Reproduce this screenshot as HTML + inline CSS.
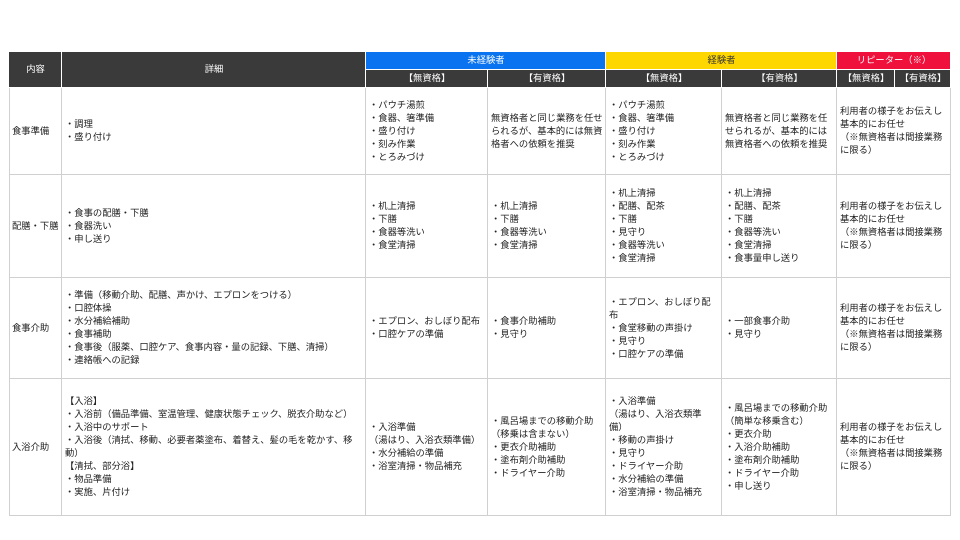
<!DOCTYPE html>
<html><head><meta charset="utf-8"><style>
body{margin:0;background:#fff;width:960px;height:540px;position:relative;overflow:hidden;font-family:"Liberation Sans","Noto Sans CJK JP",sans-serif;font-size:9.3px;color:#222}
.c{position:absolute;box-sizing:border-box;display:flex;align-items:center;padding:0 2px 0 3px;line-height:13px;border-right:1px solid #d0d0d0;border-bottom:1px solid #d0d0d0;white-space:pre-line}
.h{color:#fff;justify-content:center;border-color:#fff;font-size:9.3px}
.d{background:#3a3a3a}
</style></head><body>
<div style="position:absolute;left:9px;top:52px;width:942px;height:464px;border-left:1px solid #d0d0d0;border-top:1px solid #d0d0d0;box-sizing:border-box"></div>
<div class="c h d" style="left:9px;top:52px;width:53px;height:36px">内容</div>
<div class="c h d" style="left:62px;top:52px;width:304px;height:36px">詳細</div>
<div class="c h" style="left:366px;top:52px;width:240px;height:18px;background:#0a74f0">未経験者</div>
<div class="c h" style="left:606px;top:52px;width:231px;height:18px;background:#ffd700;color:#333">経験者</div>
<div class="c h" style="left:837px;top:52px;width:114px;height:18px;background:#f0103c">リピーター（※）</div>
<div class="c h d" style="left:366px;top:70px;width:122px;height:18px">【無資格】</div>
<div class="c h d" style="left:488px;top:70px;width:118px;height:18px">【有資格】</div>
<div class="c h d" style="left:606px;top:70px;width:116px;height:18px">【無資格】</div>
<div class="c h d" style="left:722px;top:70px;width:115px;height:18px">【有資格】</div>
<div class="c h d" style="left:837px;top:70px;width:58px;height:18px">【無資格】</div>
<div class="c h d" style="left:895px;top:70px;width:56px;height:18px">【有資格】</div>

<!-- row1 -->
<div class="c" style="left:9px;top:88px;width:53px;height:87px">食事準備</div>
<div class="c" style="left:62px;top:88px;width:304px;height:87px">・調理
・盛り付け</div>
<div class="c" style="left:366px;top:88px;width:122px;height:87px">・パウチ湯煎
・食器、箸準備
・盛り付け
・刻み作業
・とろみづけ</div>
<div class="c" style="left:488px;top:88px;width:118px;height:87px">無資格者と同じ業務を任せ
られるが、基本的には無資
格者への依頼を推奨</div>
<div class="c" style="left:606px;top:88px;width:116px;height:87px">・パウチ湯煎
・食器、箸準備
・盛り付け
・刻み作業
・とろみづけ</div>
<div class="c" style="left:722px;top:88px;width:115px;height:87px">無資格者と同じ業務を任
せられるが、基本的には
無資格者への依頼を推奨</div>
<div class="c" style="left:837px;top:88px;width:114px;height:87px">利用者の様子をお伝えし
基本的にお任せ
（※無資格者は間接業務
に限る）</div>

<!-- row2 -->
<div class="c" style="left:9px;top:175px;width:53px;height:103px;white-space:nowrap">配膳・下膳</div>
<div class="c" style="left:62px;top:175px;width:304px;height:103px">・食事の配膳・下膳
・食器洗い
・申し送り</div>
<div class="c" style="left:366px;top:175px;width:122px;height:103px">・机上清掃
・下膳
・食器等洗い
・食堂清掃</div>
<div class="c" style="left:488px;top:175px;width:118px;height:103px">・机上清掃
・下膳
・食器等洗い
・食堂清掃</div>
<div class="c" style="left:606px;top:175px;width:116px;height:103px">・机上清掃
・配膳、配茶
・下膳
・見守り
・食器等洗い
・食堂清掃</div>
<div class="c" style="left:722px;top:175px;width:115px;height:103px">・机上清掃
・配膳、配茶
・下膳
・食器等洗い
・食堂清掃
・食事量申し送り</div>
<div class="c" style="left:837px;top:175px;width:114px;height:103px">利用者の様子をお伝えし
基本的にお任せ
（※無資格者は間接業務
に限る）</div>

<!-- row3 -->
<div class="c" style="left:9px;top:278px;width:53px;height:101px">食事介助</div>
<div class="c" style="left:62px;top:278px;width:304px;height:101px">・準備（移動介助、配膳、声かけ、エプロンをつける）
・口腔体操
・水分補給補助
・食事補助
・食事後（服薬、口腔ケア、食事内容・量の記録、下膳、清掃）
・連絡帳への記録</div>
<div class="c" style="left:366px;top:278px;width:122px;height:101px;white-space:pre">・エプロン、おしぼり配布
・口腔ケアの準備</div>
<div class="c" style="left:488px;top:278px;width:118px;height:101px">・食事介助補助
・見守り</div>
<div class="c" style="left:606px;top:278px;width:116px;height:101px">・エプロン、おしぼり配
布
・食堂移動の声掛け
・見守り
・口腔ケアの準備</div>
<div class="c" style="left:722px;top:278px;width:115px;height:101px">・一部食事介助
・見守り</div>
<div class="c" style="left:837px;top:278px;width:114px;height:101px">利用者の様子をお伝えし
基本的にお任せ
（※無資格者は間接業務
に限る）</div>

<!-- row4 -->
<div class="c" style="left:9px;top:379px;width:53px;height:137px">入浴介助</div>
<div class="c" style="left:62px;top:379px;width:304px;height:137px;white-space:pre">【入浴】
・入浴前（備品準備、室温管理、健康状態チェック、脱衣介助など）
・入浴中のサポート
・入浴後（清拭、移動、必要者薬塗布、着替え、髪の毛を乾かす、移
動）
【清拭、部分浴】
・物品準備
・実施、片付け</div>
<div class="c" style="left:366px;top:379px;width:122px;height:137px">・入浴準備
（湯はり、入浴衣類準備）
・水分補給の準備
・浴室清掃・物品補充</div>
<div class="c" style="left:488px;top:379px;width:118px;height:137px;white-space:pre">・風呂場までの移動介助
（移乗は含まない）
・更衣介助補助
・塗布剤介助補助
・ドライヤー介助</div>
<div class="c" style="left:606px;top:379px;width:116px;height:137px">・入浴準備
（湯はり、入浴衣類準
備）
・移動の声掛け
・見守り
・ドライヤー介助
・水分補給の準備
・浴室清掃・物品補充</div>
<div class="c" style="left:722px;top:379px;width:115px;height:137px;white-space:pre">・風呂場までの移動介助
（簡単な移乗含む）
・更衣介助
・入浴介助補助
・塗布剤介助補助
・ドライヤー介助
・申し送り</div>
<div class="c" style="left:837px;top:379px;width:114px;height:137px">利用者の様子をお伝えし
基本的にお任せ
（※無資格者は間接業務
に限る）</div>
</body></html>
